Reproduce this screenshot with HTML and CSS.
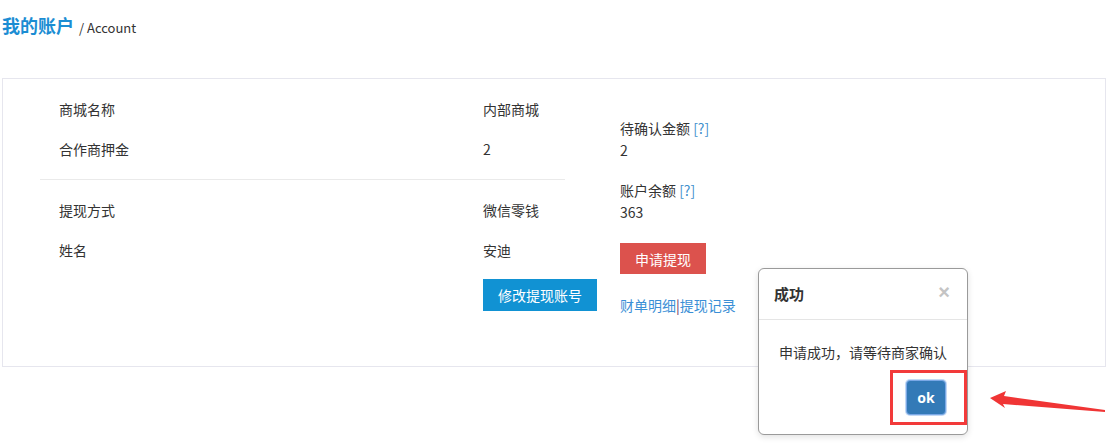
FILE: index.html
```html
<!DOCTYPE html>
<html lang="zh">
<head>
<meta charset="utf-8">
<title>我的账户</title>
<link rel="stylesheet" href="styles.css">
</head>
<body>
<div class="page">
  <h1 class="title"><span class="title-main">我的账户</span><span class="title-sub">/ Account</span></h1>
  <div class="panel">
    <div class="info">
      <div class="row"><span class="label">商城名称</span><span class="value">内部商城</span></div>
      <div class="row"><span class="label">合作商押金</span><span class="value">2</span></div>
      <div class="divider"></div>
      <div class="row"><span class="label">提现方式</span><span class="value">微信零钱</span></div>
      <div class="row"><span class="label">姓名</span><span class="value">安迪</span></div>
      <div class="row row-btn"><span class="label"></span><button class="btn btn-blue">修改提现账号</button></div>
    </div>
    <div class="side">
      <div class="side-label">待确认金额 <a class="help">[?]</a></div>
      <div class="side-value">2</div>
      <div class="side-label second">账户余额 <a class="help">[?]</a></div>
      <div class="side-value">363</div>
      <button class="btn btn-red">申请提现</button>
      <div class="links"><a class="link">财单明细</a><span class="sep">|</span><a class="link">提现记录</a></div>
    </div>
  </div>
</div>

<div class="modal">
  <div class="modal-header"><span class="modal-title">成功</span><span class="close">×</span></div>
  <div class="modal-body">申请成功，请等待商家确认</div>
  <div class="modal-footer"><button class="btn-ok">ok</button></div>
</div>
<div class="highlight"></div>
<svg class="arrow" width="120" height="30" viewBox="0 0 120 30">
  <polygon points="1,9 17,2 15,7 116,21 116,23 14,15 16,19" fill="#f03535"/>
</svg>
</body>
</html>
```

FILE: styles.css
```css
* { box-sizing: border-box; }
html, body { margin: 0; padding: 0; background: #fff; }
body {
  font-family: "Noto Sans CJK SC", "Noto Sans", sans-serif;
  font-size: 14px;
  color: #333;
  width: 1107px;
  height: 448px;
  overflow: hidden;
  position: relative;
}
.page { padding: 0 1px 0 2px; }
.title {
  margin: 0;
  padding-top: 12px;
  height: 78px;
  font-weight: normal;
  line-height: 26px;
  display: flex;
  align-items: baseline;
}
.title-main { font-size: 18px; font-weight: bold; color: #1b8dd3; }
.title-sub { font-size: 13px; color: #333; margin-left: 5px; }
.panel {
  border: 1px solid #e6e6ee;
  display: flex;
  height: 289px;
  padding-top: 10px;
}
.info { width: 525px; margin-left: 37px; flex-shrink: 0; }
.row { display: flex; height: 40px; align-items: center; line-height: 20px; }
.label { width: 443px; padding-left: 19px; flex-shrink: 0; }
.value { white-space: nowrap; }
.divider { height: 1px; background: #eaeaea; margin: 10px 0 10px 0; }
.row-btn { height: auto; margin-top: 9px; }
.btn {
  border: 0;
  font-family: inherit;
  font-size: 14px;
  color: #fff;
  padding: 0 15px;
  cursor: pointer;
  white-space: nowrap;
  flex-shrink: 0;
}
.btn-blue { background: #1192d3; height: 32px; }
.btn-red { background: #dc524d; height: 31px; margin-top: 20px; padding: 0 15px; }
.side { margin-left: 55px; padding-top: 28px; display: flex; flex-direction: column; align-items: flex-start; }
.side-label, .side-value { line-height: 22px; }
.side-label.second { margin-top: 18px; }
.help { color: #3f8fcc; }
.links { margin-top: 20px; line-height: 22px; }
.link { color: #3a8fd6; }
.sep { color: #6b2f5f; }

.modal {
  position: absolute;
  left: 758px;
  top: 268px;
  width: 210px;
  height: 167px;
  background: #fff;
  border: 1px solid #9a9a9a;
  border-radius: 6px;
  box-shadow: 0 2px 6px rgba(0,0,0,0.12);
}
.modal-header {
  height: 51px;
  border-bottom: 1px solid #e5e5e5;
  display: flex;
  align-items: center;
  justify-content: space-between;
  padding: 0 17px 2px 15px;
}
.modal-title { font-size: 15px; font-weight: bold; color: #333; }
.close { font-family: "Liberation Sans", sans-serif; font-size: 20px; font-weight: bold; color: #c4c4c4; line-height: 1; margin-top: -3px; }
.modal-body { padding: 22px 0 0 20px; line-height: 20px; font-size: 14px; }
.modal-footer { display: flex; justify-content: flex-end; padding: 18px 21px 0 0; }
.btn-ok {
  width: 40px;
  height: 35px;
  background: #337ab7;
  border: 1px solid #7aa8e6;
  border-radius: 4px;
  color: #fff;
  font-family: "Noto Sans", sans-serif;
  font-size: 14px;
  font-weight: bold;
  padding: 0;
  box-shadow: 0 0 0 1px rgba(102,160,230,0.4);
}
.highlight {
  position: absolute;
  left: 890px;
  top: 370px;
  width: 77px;
  height: 55px;
  border: 3px solid #f23a3a;
}
.arrow { position: absolute; left: 989px; top: 389px; }
```
